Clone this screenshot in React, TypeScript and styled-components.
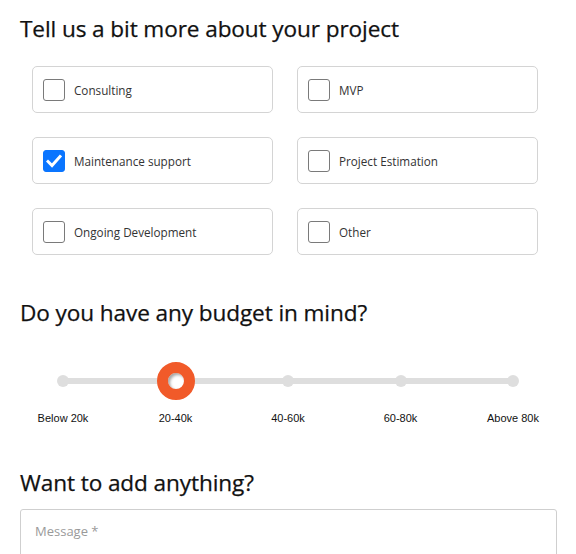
import React, { useState } from 'react';
import styled, { createGlobalStyle } from 'styled-components';

const GlobalStyle = createGlobalStyle`
  * { box-sizing: border-box; }
  body {
    margin: 0;
    background: #fff;
    font-family: 'Open Sans', sans-serif;
    color: #222;
  }
`;

const StyledForm = styled('form')`
  padding: 14px 20px 0 20px;
  width: 576px;
`;

const Heading = styled('h2')`
  margin: 0;
  font-size: 22.6px;
  font-weight: 400;
  line-height: 30px;
  color: #111;
  letter-spacing: -0.1px;
  -webkit-text-stroke: 0.25px #111;
`;

const OptionGrid = styled('div')`
  display: grid;
  grid-template-columns: 241px 241px;
  column-gap: 24px;
  row-gap: 24px;
  padding: 22px 0 0 12px;
`;

const OptionCard = styled('label')`
  display: flex;
  align-items: center;
  gap: 9px;
  height: 47px;
  padding: 0 10px;
  border: 1px solid #d4d4d4;
  border-radius: 5px;
  cursor: pointer;
  font-size: 11.7px;
  color: #333;
`;

const Box = styled('span')<{ $checked: boolean }>`
  width: 22px;
  height: 22px;
  flex-shrink: 0;
  border-radius: 3px;
  border: 1px solid ${(p) => (p.$checked ? '#0a75ff' : '#7a7a7a')};
  background: ${(p) => (p.$checked ? '#0a75ff' : '#fff')};
  display: flex;
  align-items: center;
  justify-content: center;
`;

const HiddenInput = styled('input')`
  display: none;
`;

const BudgetHeading = styled(Heading)`
  margin-top: 43px;
`;

const SliderWrap = styled('div')`
  padding-top: 50px;
`;

const Track = styled('div')`
  margin: 0 43px;
  height: 6px;
  border-radius: 3px;
  background: #dedede;
  display: flex;
  justify-content: space-between;
  align-items: center;
`;

const StopSlot = styled('div')`
  width: 0;
  display: flex;
  justify-content: center;
  align-items: center;
`;

const Stop = styled('button')<{ $active: boolean }>`
  flex-shrink: 0;
  width: ${(p) => (p.$active ? '38px' : '12px')};
  height: ${(p) => (p.$active ? '38px' : '12px')};
  padding: 0;
  border: ${(p) => (p.$active ? '11px solid #f15a29' : 'none')};
  border-radius: 50%;
  background: ${(p) => (p.$active ? '#fff' : '#dedede')};
  box-shadow: ${(p) =>
    p.$active ? 'inset 2px 2px 3px rgba(0, 0, 0, 0.35)' : 'none'};
  cursor: pointer;
`;

const StopLabels = styled('div')`
  display: flex;
  justify-content: space-between;
  margin-top: 28px;
`;

const StopLabel = styled('span')`
  width: 86px;
  text-align: center;
  font-family: 'Liberation Sans', Arial, sans-serif;
  font-size: 11px;
  color: #111;
`;

const MessageHeading = styled(Heading)`
  margin-top: 44px;
`;

const Message = styled('textarea')`
  display: block;
  margin-top: 11px;
  width: 537px;
  height: 120px;
  padding: 12px 14px;
  border: 1px solid #cfcfcf;
  border-radius: 3px;
  font-family: 'Open Sans', sans-serif;
  font-size: 13px;
  resize: none;
  outline: none;

  &::placeholder {
    color: #9a9a9a;
  }
`;

const options = [
  'Consulting',
  'MVP',
  'Maintenance support',
  'Project Estimation',
  'Ongoing Development',
  'Other',
];

const budgets = ['Below 20k', '20-40k', '40-60k', '60-80k', 'Above 80k'];

function App() {
  const [selected, setSelected] = useState<string[]>(['Maintenance support']);
  const [budget, setBudget] = useState(1);

  const toggle = (name: string) =>
    setSelected((prev) =>
      prev.includes(name) ? prev.filter((n) => n !== name) : [...prev, name]
    );

  return (
    <>
      <GlobalStyle />
      <StyledForm onSubmit={(e) => e.preventDefault()}>
        <Heading>Tell us a bit more about your project</Heading>
        <OptionGrid>
          {options.map((name) => {
            const checked = selected.includes(name);
            return (
              <OptionCard key={name}>
                <HiddenInput
                  type="checkbox"
                  checked={checked}
                  onChange={() => toggle(name)}
                />
                <Box $checked={checked}>
                  {checked && (
                    <svg width="16" height="14" viewBox="0 0 16 14">
                      <path
                        d="M2 7.5 L6 11.5 L14 2.5"
                        fill="none"
                        stroke="#fff"
                        strokeWidth="3"
                        strokeLinecap="square"
                      />
                    </svg>
                  )}
                </Box>
                {name}
              </OptionCard>
            );
          })}
        </OptionGrid>

        <BudgetHeading>Do you have any budget in mind?</BudgetHeading>
        <SliderWrap>
          <Track>
            {budgets.map((b, i) => (
              <StopSlot key={b}>
                <Stop
                  type="button"
                  aria-label={b}
                  $active={i === budget}
                  onClick={() => setBudget(i)}
                />
              </StopSlot>
            ))}
          </Track>
          <StopLabels>
            {budgets.map((b) => (
              <StopLabel key={b}>{b}</StopLabel>
            ))}
          </StopLabels>
        </SliderWrap>

        <MessageHeading>Want to add anything?</MessageHeading>
        <Message placeholder="Message *" />
      </StyledForm>
    </>
  );
}

export default App;
